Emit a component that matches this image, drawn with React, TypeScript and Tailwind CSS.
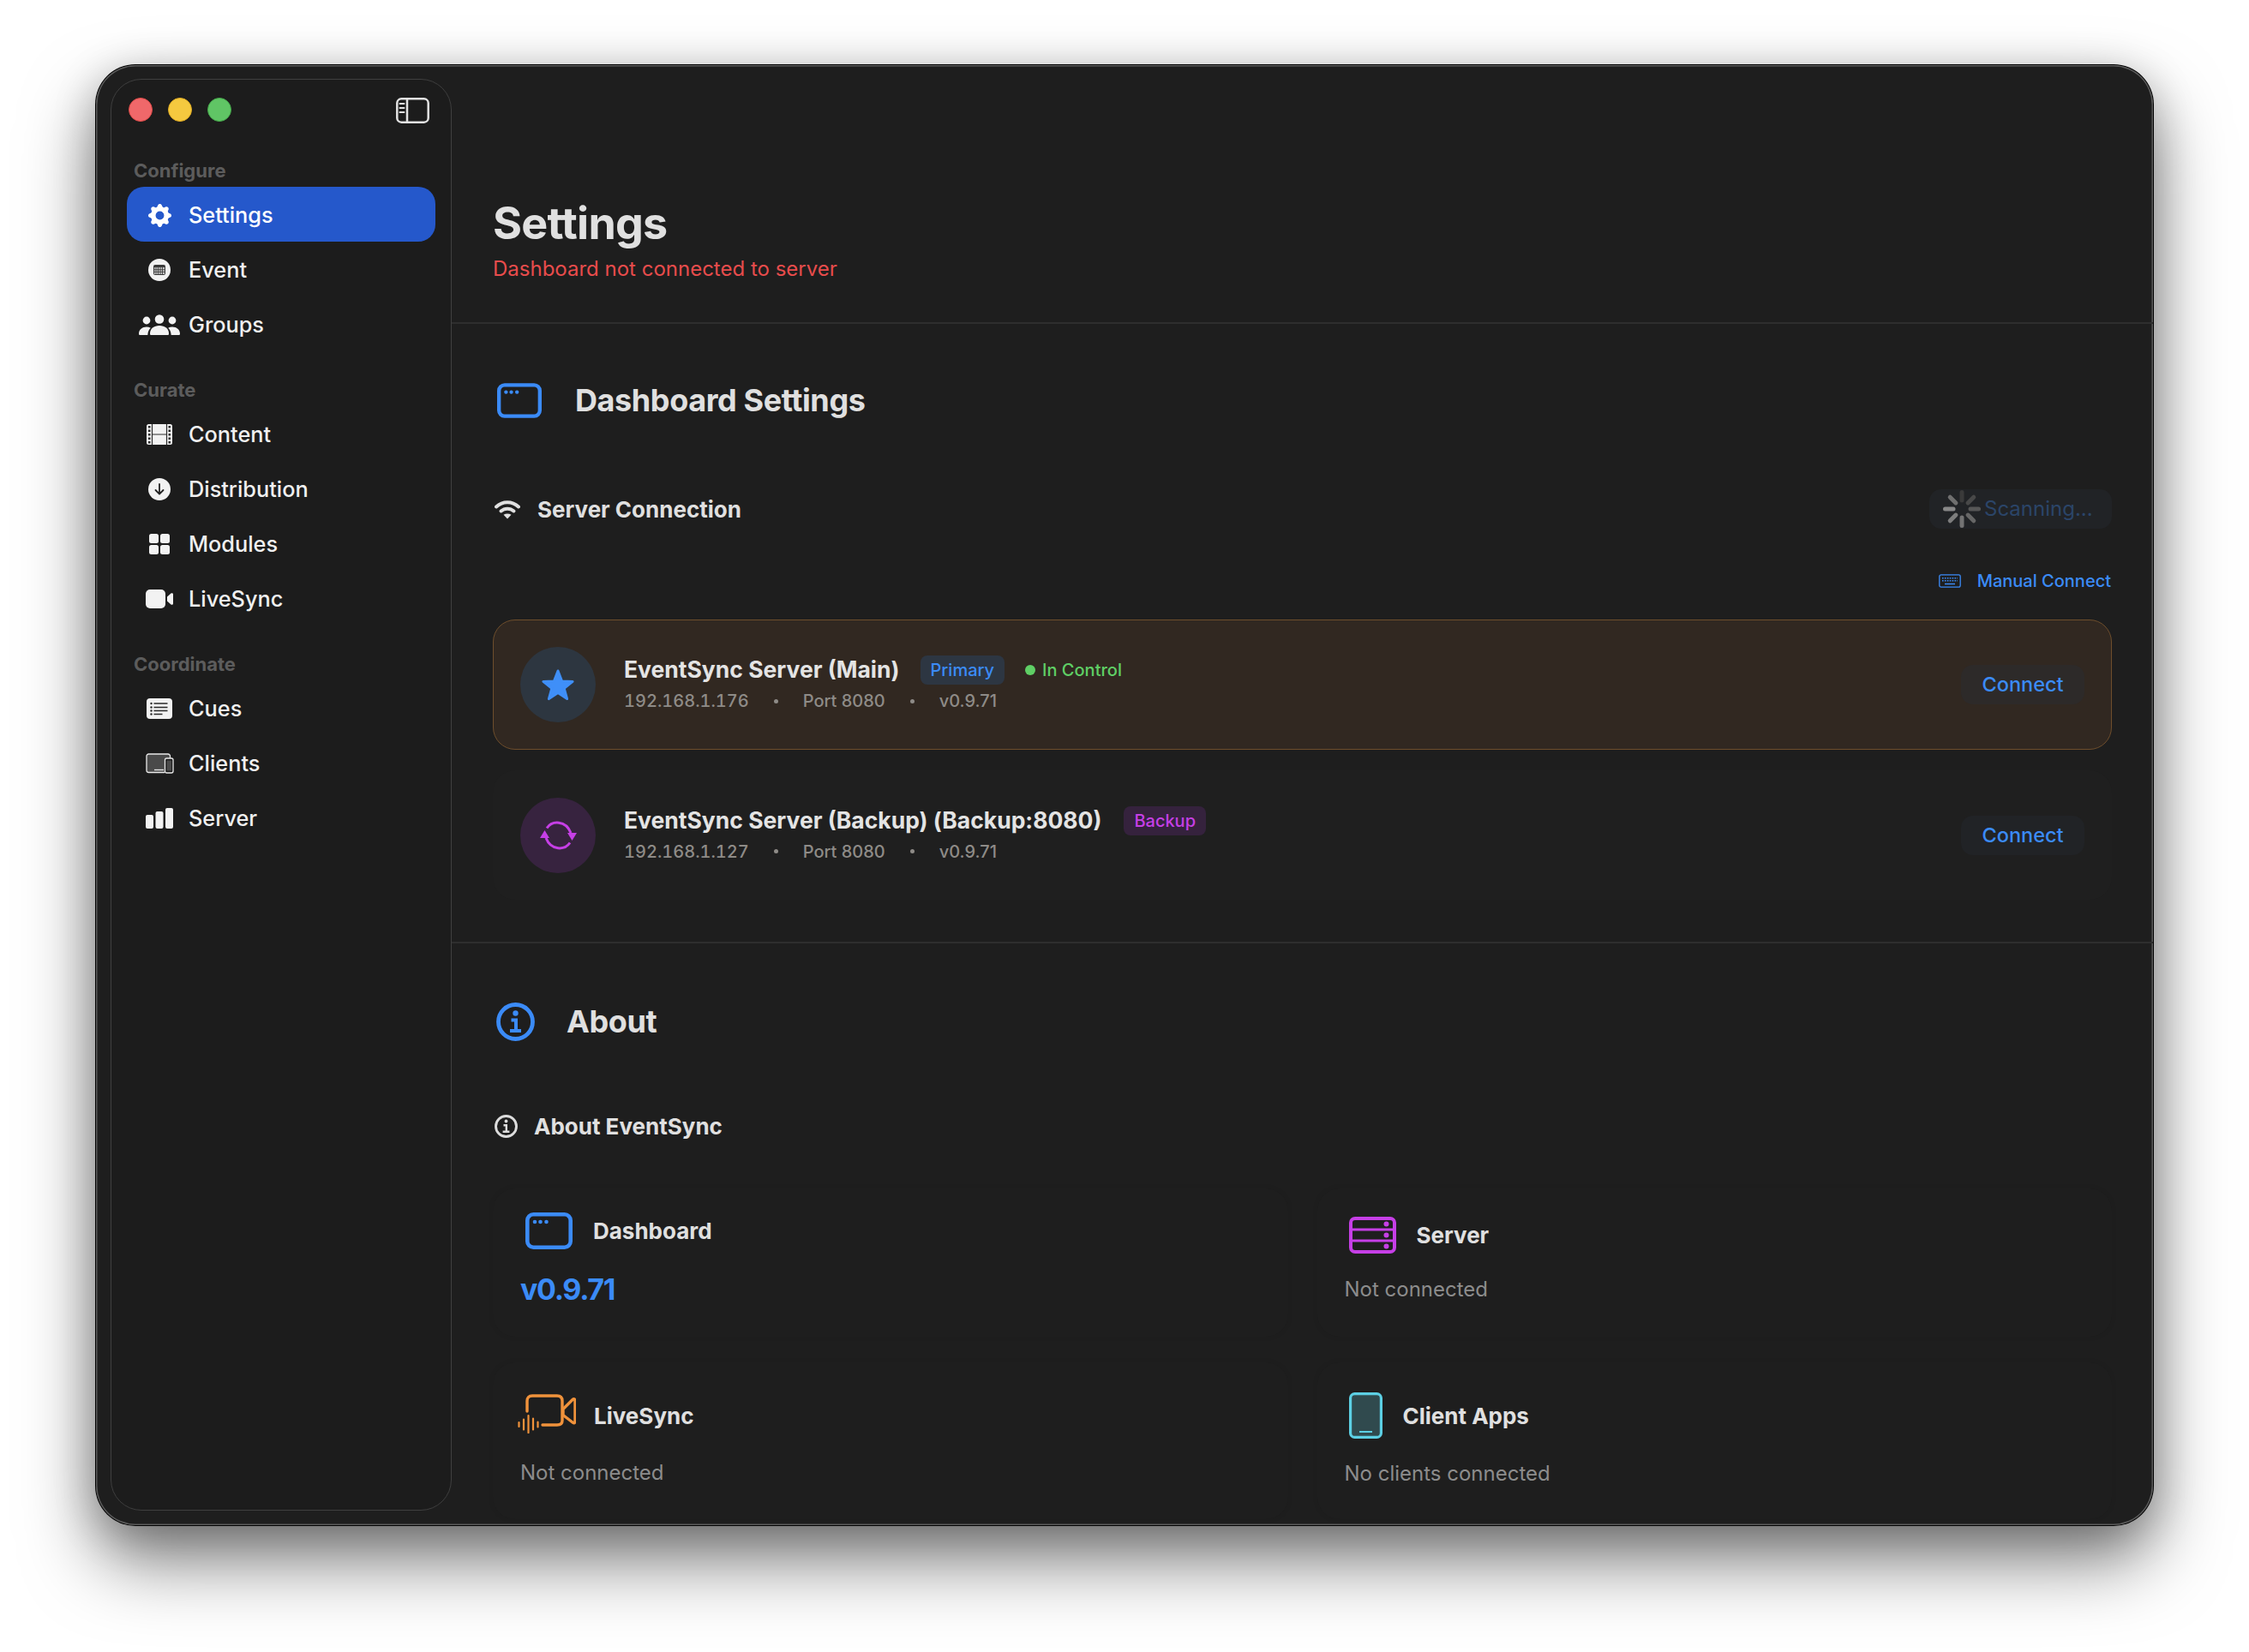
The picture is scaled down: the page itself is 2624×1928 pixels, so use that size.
import { BsGearFill } from "react-icons/bs";

const FONT = "font-['Inter','Noto_Sans',sans-serif]";

function EventIcon() {
  return (
    <svg width="26" height="26" viewBox="0 0 26 26">
      <circle cx="13" cy="13" r="13" fill="#f2f2f2" />
      <rect x="6" y="7" width="14" height="12" rx="2" fill="#3a3a3a" />
      <rect x="7" y="10" width="12" height="8" fill="#f2f2f2" opacity="0.75" />
      <path d="M9 10v8M11.5 10v8M14 10v8M16.5 10v8M7 12.7h12M7 15.3h12" stroke="#3a3a3a" strokeWidth="0.8" />
    </svg>
  );
}

function GroupsIcon() {
  return (
    <svg width="48" height="24" viewBox="0 0 48 24" fill="#f2f2f2">
      <circle cx="24" cy="5.5" r="5.3" />
      <circle cx="9" cy="7" r="4.4" />
      <circle cx="39" cy="7" r="4.4" />
      <path d="M13 22.5c0-6 4.5-9.5 11-9.5s11 3.5 11 9.5c0 1-.6 1.5-1.5 1.5h-19c-.9 0-1.500-.5-1.500-1.500z" />
      <path d="M0 22.500c0-5 4-8 9-8 1.800 0 3.400.4 4.800 1.200-2 1.800-3.200 4.300-3.500 8.300H1.500C.6 24 0 23.500 0 22.500z" />
      <path d="M48 22.500c0-5-4-8-9-8-1.800 0-3.400.4-4.800 1.200 2 1.800 3.200 4.300 3.500 8.300h8.800c.9 0 1.500-.5 1.500-1.500z" />
    </svg>
  );
}

function FilmIcon() {
  return (
    <svg width="30" height="24" viewBox="0 0 30 24">
      <rect width="30" height="24" rx="2.500" fill="#f2f2f2" />
      <path d="M6.500 0v24M23.500 0v24M6.500 12h17" stroke="#2a2a2a" strokeWidth="1.200" />
      {[2, 6.500, 11, 15.500, 20].map((y) => (
        <g key={y} fill="#2a2a2a">
          <rect x="2" y={y} width="2.500" height="2.500" />
          <rect x="25.500" y={y} width="2.500" height="2.500" />
        </g>
      ))}
    </svg>
  );
}

function DistributionIcon() {
  return (
    <svg width="26" height="26" viewBox="0 0 26 26">
      <circle cx="13" cy="13" r="13" fill="#f2f2f2" />
      <path d="M13 7v11M8.500 14l4.500 4.500 4.500-4.500" fill="none" stroke="#222" strokeWidth="1.800" strokeLinecap="round" strokeLinejoin="round" />
    </svg>
  );
}

function ModulesIcon() {
  return (
    <svg width="24" height="24" viewBox="0 0 24 24" fill="#f2f2f2">
      <rect x="0" y="0" width="11" height="11" rx="2.500" />
      <rect x="13" y="0" width="11" height="11" rx="2.500" />
      <rect x="0" y="13" width="11" height="11" rx="2.500" />
      <rect x="13" y="13" width="11" height="11" rx="2.500" />
    </svg>
  );
}

function VideoFillIcon() {
  return (
    <svg width="32" height="22" viewBox="0 0 32 22" fill="#f2f2f2">
      <rect width="23" height="22" rx="5" />
      <path d="M25 8.500l4.500-4c.9-.8 2.500-.2 2.500 1v11c0 1.200-1.600 1.800-2.500 1l-4.500-4z" />
    </svg>
  );
}

function CuesIcon() {
  return (
    <svg width="30" height="24" viewBox="0 0 30 24">
      <rect width="30" height="24" rx="4" fill="#f2f2f2" />
      <path d="M8.500 6h16M8.500 10.500h16M8.500 14.500h16M8.500 18.500h10" stroke="#2a2a2a" strokeWidth="1.500" />
      <g fill="#2a2a2a">
        <circle cx="5.500" cy="6" r="1.200" />
        <circle cx="5.500" cy="10.500" r="1.200" />
        <circle cx="5.500" cy="14.500" r="1.200" />
        <circle cx="5.500" cy="18.500" r="1.200" />
      </g>
    </svg>
  );
}

function ClientsIcon() {
  return (
    <svg width="33" height="24" viewBox="0 0 33 24">
      <path d="M22 22.500H3.500a2.500 2.500 0 0 1-2.500-2.500V3.500A2.500 2.500 0 0 1 3.500 1H26a2.500 2.500 0 0 1 2.500 2.500V6" fill="#4a4a4a" stroke="#e8e8e8" strokeWidth="1.300" />
      <path d="M10 19.500h11" stroke="#e8e8e8" strokeWidth="1.300" />
      <rect x="22.500" y="6" width="9.500" height="17" rx="2" fill="#1c1c1c" stroke="#e8e8e8" strokeWidth="1.300" />
      <rect x="24.500" y="8.500" width="5.500" height="12" fill="#4a4a4a" />
    </svg>
  );
}

function BarsIcon() {
  return (
    <svg width="32" height="24" viewBox="0 0 32 24" fill="#f2f2f2">
      <rect x="0" y="8" width="9" height="16" rx="2" />
      <rect x="11.500" y="4" width="9" height="20" rx="2" />
      <rect x="23" y="0" width="9" height="24" rx="2" />
    </svg>
  );
}

function SidebarToggleIcon() {
  return (
    <svg width="39" height="30" viewBox="0 0 39 30" fill="none" stroke="#e2e2e2">
      <rect x="1.300" y="1.300" width="36.400" height="27.400" rx="5" strokeWidth="2.500" />
      <path d="M13 1.300v27.400" strokeWidth="2.500" />
      <path d="M4.500 7h5M4.500 12h5M4.500 17h5" strokeWidth="2" strokeLinecap="round" />
    </svg>
  );
}

function WindowIcon({ className }: { className: string }) {
  return (
    <svg className={className} viewBox="0 0 55 43" fill="none">
      <rect x="2.300" y="2.300" width="50.400" height="38.400" rx="7" stroke="#3b8bf7" strokeWidth="4.600" />
      <g fill="#3b8bf7">
        <circle cx="11" cy="11" r="2.300" />
        <circle cx="17.500" cy="11" r="2.300" />
        <circle cx="24.500" cy="11" r="2.300" />
      </g>
    </svg>
  );
}

function WifiIcon() {
  return (
    <svg width="30" height="24" viewBox="0 0 30 24" fill="none" stroke="#e0e0e0" strokeLinecap="round">
      <path d="M2 9.500C9.500 2.500 20.500 2.500 28 9.500" strokeWidth="4" />
      <path d="M7.500 14.500c4.400-3.800 10.600-3.800 15 0" strokeWidth="4" />
      <path d="M10.500 18.800c2.800-1.900 6.200-1.900 9 0L15 23.500z" fill="#e0e0e0" stroke="none" />
    </svg>
  );
}

const spinnerShades = ["#3a3a3a", "#484848", "#575757", "#666666", "#737373", "#7d7d7d", "#888888", "#6f6f6f"];

function Spinner() {
  return (
    <svg width="46" height="46" viewBox="0 0 46 46" fill="none" strokeWidth="5" strokeLinecap="round">
      {spinnerShades.map((c, i) => (
        <line key={i} x1="23" y1="3.500" x2="23" y2="13" stroke={c} transform={`rotate(${i * 45} 23 23)`} />
      ))}
    </svg>
  );
}

function KeyboardIcon() {
  return (
    <svg width="26" height="16" viewBox="0 0 26 16" fill="none" stroke="#3b8bf7">
      <rect x="0.800" y="0.800" width="24.400" height="14.400" rx="2" strokeWidth="1.300" />
      <path d="M4 4.700h18M4 7.700h18" strokeWidth="1.500" strokeDasharray="1.600 1.300" />
      <path d="M7 11.500h12" strokeWidth="1.500" />
    </svg>
  );
}

function StarIcon() {
  return (
    <svg width="40" height="38" viewBox="0 0 40 38">
      <polygon
        points="20,3 24.500,14.900 37.100,15.400 27.200,23.300 30.600,35.600 20,28.600 9.400,35.600 12.800,23.300 2.900,15.400 15.500,14.900"
        fill="#3f8ff8"
        stroke="#3f8ff8"
        strokeWidth="3"
        strokeLinejoin="round"
      />
    </svg>
  );
}

function SyncIcon() {
  return (
    <svg width="43" height="36" viewBox="0 0 43 36" fill="none">
      <path d="M8 9.500C14 0.500 30 0 36 15" stroke="#c63fe6" strokeWidth="3" />
      <path d="M35 26.500C29 35.500 13 36 7 21" stroke="#c63fe6" strokeWidth="3" />
      <path d="M32 15h11l-5.500 9z" fill="#c63fe6" />
      <path d="M0 21h11l-5.500-9z" fill="#c63fe6" />
    </svg>
  );
}

function InfoIcon({ className, color }: { className: string; color: string }) {
  return (
    <svg className={className} viewBox="0 0 45 45" fill="none" stroke={color}>
      <circle cx="22.500" cy="22.500" r="20" strokeWidth="4.800" />
      <circle cx="22.500" cy="12.500" r="3.200" fill={color} stroke="none" />
      <path d="M17.500 20.500h5.500v12.500M16 33h13" strokeWidth="4" />
    </svg>
  );
}

function LiveSyncIcon() {
  return (
    <svg width="68" height="46" viewBox="0 0 68 46" fill="none" stroke="#f0923b" strokeLinecap="round" strokeLinejoin="round">
      <path d="M11 20V8c0-3.500 2-6 6-6h29c4 0 6 2.500 6 6v23c0 3.500-2 5-6 5H29" strokeWidth="3.400" />
      <path d="M53 17.500L64 6.500c1.500-1.300 3-.5 3 1V32c0 1.500-1.500 2.300-3 1l-11-8.500z" strokeWidth="3.400" />
      <path d="M1.500 33v5M7 29.500v12M12.500 25v20M18 28.500v13M23.500 32.500v6" strokeWidth="2.200" />
    </svg>
  );
}

function RackIcon() {
  return (
    <svg width="55" height="43" viewBox="0 0 55 43" fill="none" stroke="#c63fe6">
      <rect x="2" y="2" width="51" height="39" rx="5" strokeWidth="4" />
      <path d="M2 15h51M2 28h51" strokeWidth="3" />
      <g fill="#c63fe6" stroke="none">
        <circle cx="43.500" cy="8.500" r="3" />
        <circle cx="43.500" cy="21.500" r="3" />
        <circle cx="43.500" cy="34.500" r="3" />
      </g>
    </svg>
  );
}

function TabletIcon() {
  return (
    <svg width="39" height="54" viewBox="0 0 39 54">
      <rect x="1.600" y="1.600" width="35.800" height="50.800" rx="5" fill="#304a4e" stroke="#5ccfe3" strokeWidth="3.200" />
      <path d="M12 46h15" stroke="#5ccfe3" strokeWidth="2" />
    </svg>
  );
}

const navSections = [
  {
    label: "Configure",
    items: [
      { name: "Settings", icon: <BsGearFill size={27} color="#ffffff" />, active: true },
      { name: "Event", icon: <EventIcon /> },
      { name: "Groups", icon: <GroupsIcon /> },
    ],
  },
  {
    label: "Curate",
    items: [
      { name: "Content", icon: <FilmIcon /> },
      { name: "Distribution", icon: <DistributionIcon /> },
      { name: "Modules", icon: <ModulesIcon /> },
      { name: "LiveSync", icon: <VideoFillIcon /> },
    ],
  },
  {
    label: "Coordinate",
    items: [
      { name: "Cues", icon: <CuesIcon /> },
      { name: "Clients", icon: <ClientsIcon /> },
      { name: "Server", icon: <BarsIcon /> },
    ],
  },
];

function Sidebar() {
  return (
    <aside className="w-[398px] h-full rounded-[36px] border border-[#3f3f3f] bg-[#1c1c1c] flex flex-col">
      <div className="h-[93px] pl-[20px] pr-[25px] pt-[21px] flex items-start justify-between">
        <div className="flex gap-[18px]">
          <span className="w-[28px] h-[28px] rounded-full bg-[#f0686a] border border-[#dd4a48]" />
          <span className="w-[28px] h-[28px] rounded-full bg-[#f5c93f] border border-[#dfab22]" />
          <span className="w-[28px] h-[28px] rounded-full bg-[#60c565] border border-[#45a84b]" />
        </div>
        <SidebarToggleIcon />
      </div>
      <nav className="px-[18px] flex flex-col gap-[32px]">
        {navSections.map((s) => (
          <div key={s.label}>
            <div className="h-[26px] mb-[6px] pl-[8px] flex items-center text-[22px] font-bold text-[#5c5c5c]">{s.label}</div>
            {s.items.map((item) => (
              <div
                key={item.name}
                className={
                  item.active
                    ? "h-[64px] rounded-[20px] bg-[#2558cb] flex items-center pl-2 pt-[2px] text-[25.300px] font-medium text-white"
                    : "h-[64px] rounded-[20px] flex items-center pl-2 pt-[2px] text-[25.300px] font-medium text-[#f0f0f0]"
                }
              >
                <span className="w-[60px] mr-[4px] flex items-center justify-center">{item.icon}</span>
                {item.name}
              </div>
            ))}
          </div>
        ))}
      </nav>
    </aside>
  );
}

function ServerMeta({ ip }: { ip: string }) {
  return (
    <div className="mt-[2px] h-[32px] flex items-center gap-[29px] text-[20px] font-medium text-[#8e8b87]">
      <span className="tabular-nums">{ip}</span>
      <span className="w-[5px] h-[5px] rounded-full bg-[#8e8b87]" />
      <span>Port 8080</span>
      <span className="w-[5px] h-[5px] rounded-full bg-[#8e8b87]" />
      <span>v0.9.71</span>
    </div>
  );
}

function ConnectButton({ bg }: { bg: string }) {
  return (
    <div className={`w-[144px] h-[46px] rounded-[14px] flex items-center justify-center text-[23.500px] font-medium text-[#3b8bf7] ${bg}`}>
      Connect
    </div>
  );
}

export default function App() {
  return (
    <div className={`w-[2624px] h-[1928px] bg-white pt-[76px] pl-[112px] overflow-hidden ${FONT}`}>
      <div className="w-[2400px] h-[1704px] rounded-[46px] bg-[#1e1e1e] flex overflow-hidden shadow-[0_42px_84px_rgba(0,0,0,0.5),0_10px_50px_rgba(0,0,0,0.22),0_0_0_1px_#000000,inset_0_0_0_1.5px_#5a5a5a]">
        <div className="pl-[17px] pt-[16px] pb-[17px] shrink-0">
          <Sidebar />
        </div>

        <main className="flex-1 min-w-0">
          {/* Header */}
          <header className="h-[302px] pt-[155px] px-[48px] border-b-2 border-[#2e2e2e]">
            <h1 className="h-[60px] leading-[60px] text-[52px] font-bold tracking-[-0.800px] text-[#e0e0e0]">Settings</h1>
            <p className="mt-[8px] h-[30px] leading-[30px] text-[24px] text-[#e84c4c]">Dashboard not connected to server</p>
          </header>

          {/* Dashboard settings */}
          <section className="px-[48px] pt-[67px] pb-[49px] border-b-2 border-[#2e2e2e]">
            <div className="flex items-center h-[44px]">
              <span className="pl-[5px]">
                <WindowIcon className="w-[52px] h-[41px]" />
              </span>
              <h2 className="ml-[39px] text-[36px] font-bold tracking-[-0.400px] text-[#e0e0e0]">Dashboard Settings</h2>
            </div>

            <div className="mt-[82px] flex items-center justify-between">
              <div className="flex items-center pl-[2px]">
                <WifiIcon />
                <span className="ml-[20px] pt-[1px] text-[26px] font-bold text-[#e0e0e0]">Server Connection</span>
              </div>
              <div className="w-[213px] h-[46px] rounded-[14px] bg-[#212326] pl-[15px] flex items-center gap-[3px] text-[24px] text-[#2b4569]">
                <Spinner />
                Scanning...
              </div>
            </div>

            <div className="mt-[46px] h-[30px] flex items-center justify-end text-[20px] font-medium text-[#3b8bf7]">
              <KeyboardIcon />
              <span className="ml-[19px] mr-[1px]">Manual Connect</span>
            </div>

            <div className="mt-[30px] flex flex-col gap-[24px]">
              <div className="h-[152px] rounded-[26px] border border-[#6e4e2c] bg-[#312821] px-[31px] flex items-center">
                <div className="w-[88px] h-[88px] rounded-full bg-[#2d3640] flex items-center justify-center shrink-0">
                  <StarIcon />
                </div>
                <div className="ml-[33px] flex-1">
                  <div className="h-[36px] flex items-center text-[26.500px] font-bold text-[#e4e4e4]">
                    EventSync Server (Main)
                    <span className="ml-[24px] h-[34px] px-[12px] rounded-[8px] bg-[#2d3642] flex items-center text-[20px] font-medium text-[#3b8bf7]">Primary</span>
                    <span className="ml-[24px] w-[12px] h-[12px] rounded-full bg-[#5fcf65]" />
                    <span className="ml-[8px] text-[20px] font-medium text-[#5fcf65]">In Control</span>
                  </div>
                  <ServerMeta ip="192.168.1.176" />
                </div>
                <ConnectButton bg="bg-[#2d2a29]" />
              </div>

              <div className="h-[151px] rounded-[26px] bg-[#1f1f1f] px-[32px] flex items-center">
                <div className="w-[88px] h-[88px] rounded-full bg-[#37233f] flex items-center justify-center shrink-0">
                  <SyncIcon />
                </div>
                <div className="ml-[33px] flex-1">
                  <div className="h-[36px] flex items-center text-[26.500px] font-bold text-[#e4e4e4]">
                    EventSync Server (Backup) (Backup:8080)
                    <span className="ml-[26px] h-[34px] px-[12px] rounded-[8px] bg-[#35223d] flex items-center text-[20px] font-medium text-[#c63fe6]">Backup</span>
                  </div>
                  <ServerMeta ip="192.168.1.127" />
                </div>
                <ConnectButton bg="bg-[#212326]" />
              </div>
            </div>
          </section>

          {/* About */}
          <section className="px-[48px] pt-[68px]">
            <div className="flex items-center h-[46px] pl-[4px]">
              <InfoIcon className="w-[45px] h-[45px]" color="#3b8bf7" />
              <h2 className="ml-[37px] text-[36px] font-bold tracking-[-0.400px] text-[#e0e0e0]">About</h2>
            </div>

            <div className="mt-[85px] h-[28px] flex items-center pl-[2px]">
              <InfoIcon className="w-[27px] h-[27px]" color="#dcdcdc" />
              <span className="ml-[19px] pt-[1px] text-[26px] font-bold text-[#e0e0e0]">About EventSync</span>
            </div>

            <div className="mt-[59px] grid grid-cols-2 gap-x-[34px] gap-y-[30px]">
              <div className="h-[173px] rounded-[26px] bg-[#1e1e1e] shadow-[0_0_6px_rgba(0,0,0,0.08)] pt-[27px] px-[32px]">
                <div className="h-[44px] flex items-center pl-[6px]">
                  <WindowIcon className="w-[55px] h-[43px]" />
                  <span className="ml-[24px] text-[26px] font-bold text-[#e0e0e0]">Dashboard</span>
                </div>
                <div className="mt-[25px] h-[44px] leading-[44px] text-[34px] font-bold tracking-[-1.300px] text-[#3b8bf7]">v0.9.71</div>
              </div>

              <div className="h-[173px] rounded-[26px] bg-[#1e1e1e] shadow-[0_0_6px_rgba(0,0,0,0.08)] pt-[33px] px-[32px]">
                <div className="h-[42px] flex items-center pl-[5px]">
                  <RackIcon />
                  <span className="ml-[24px] text-[26px] font-bold text-[#e0e0e0]">Server</span>
                </div>
                <div className="mt-[26px] h-[34px] leading-[34px] text-[24px] text-[#8c8c8c]">Not connected</div>
              </div>

              <div className="h-[183px] rounded-[26px] bg-[#1e1e1e] shadow-[0_0_6px_rgba(0,0,0,0.08)] pt-[39px] px-[32px]">
                <div className="h-[46px] flex items-center -ml-[3px]">
                  <span className="-mt-[5px]">
                    <LiveSyncIcon />
                  </span>
                  <span className="ml-[21px] text-[26px] font-bold text-[#e0e0e0]">LiveSync</span>
                </div>
                <div className="mt-[27px] h-[34px] leading-[34px] text-[24px] text-[#8c8c8c]">Not connected</div>
              </div>

              <div className="h-[183px] rounded-[26px] bg-[#1e1e1e] shadow-[0_0_6px_rgba(0,0,0,0.08)] pt-[35px] px-[32px]">
                <div className="h-[54px] flex items-center pl-[5px]">
                  <TabletIcon />
                  <span className="ml-[24px] text-[26px] font-bold text-[#e0e0e0]">Client Apps</span>
                </div>
                <div className="mt-[24px] h-[34px] leading-[34px] text-[24px] text-[#8c8c8c]">No clients connected</div>
              </div>
            </div>
          </section>
        </main>
      </div>
    </div>
  );
}
